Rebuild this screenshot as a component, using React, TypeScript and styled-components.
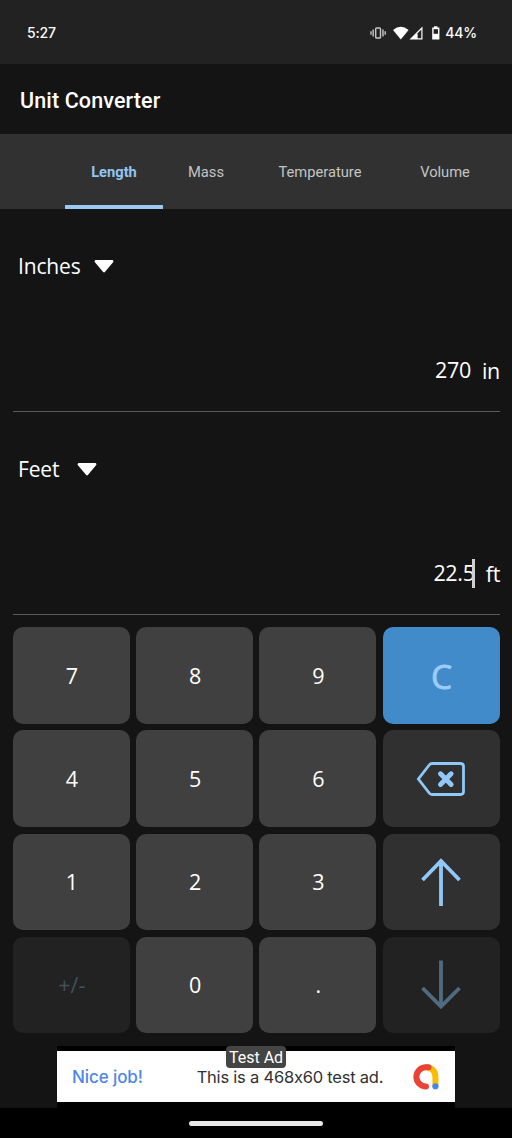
import React from 'react';
import styled, { createGlobalStyle } from 'styled-components';

const GlobalStyle = createGlobalStyle`
  * { box-sizing: border-box; }
  body { margin: 0; background: #141414; }
`;

const Screen = styled.div`
  display: flex;
  flex-direction: column;
  width: 512px;
  height: 1138px;
  overflow: hidden;
  background: #141414;
  color: #fff;
  font-family: 'Open Sans', 'Noto Sans', sans-serif;
`;

const StatusBar = styled.header`
  display: flex;
  align-items: center;
  justify-content: space-between;
  height: 64px;
  padding: 1px 35px 0 27px;
  background: #222;
  font: 500 14px/20px Inter, sans-serif;
  letter-spacing: -0.15px;
`;

const StatusIcons = styled.div`
  display: flex;
  align-items: center;
`;

const StatusSvg = styled.svg`
  display: block;
  margin-right: 4px;
`;

const AppBar = styled.div`
  display: flex;
  align-items: center;
  height: 70px;
  padding: 3px 20px 0;
  font: 500 21.5px/28px Roboto, sans-serif;
  letter-spacing: 0.13px;
`;

const Tabs = styled.nav`
  display: flex;
  height: 75px;
  padding-left: 65px;
  background: #313131;
`;

const Tab = styled.button<{ $width: number; $active?: boolean }>`
  flex: none;
  width: ${(p) => p.$width}px;
  padding: 5px 0 0;
  border: 0;
  border-bottom: 4px solid ${(p) => (p.$active ? '#9cc9f3' : 'transparent')};
  background: none;
  color: ${(p) => (p.$active ? '#90c5f5' : '#c4c4c4')};
  font: ${(p) => (p.$active ? 700 : 400)} 14.7px/20px Roboto, sans-serif;
  letter-spacing: 0;
  text-align: center;
`;

const UnitPanel = styled.section`
  display: flex;
  flex-direction: column;
  justify-content: space-between;
  height: 203px;
  margin: 0 12px 0 13px;
  padding: 42px 0 25px;
  border-bottom: 1px solid #5a5a5a;
`;

const UnitPicker = styled.button`
  display: flex;
  align-items: center;
  gap: 13px;
  padding: 0 0 0 5px;
  border: 0;
  background: none;
  color: #fff;
  font: 400 21px/30px 'Open Sans', 'Noto Sans', sans-serif;
  letter-spacing: -0.15px;
`;

const UnitName = styled.span<{ $width: number }>`
  width: ${(p) => p.$width}px;
  text-align: left;
`;

const Reading = styled.div`
  display: flex;
  justify-content: flex-end;
  align-items: center;
  gap: 11px;
  font-size: 21.5px;
  line-height: 30px;
`;

const Amount = styled.span`
  display: flex;
  align-items: center;
  letter-spacing: -0.3px;
`;

const Suffix = styled.span`
  padding-top: 2px;
  letter-spacing: -0.3px;
`;

const Caret = styled.i`
  width: 3px;
  height: 29px;
  margin-left: -3px;
  background: #d0d0d0;
`;

const Keypad = styled.main`
  display: grid;
  grid-template-columns: repeat(4, 117.2px);
  grid-auto-rows: 96.8px;
  gap: 6.3px 6.1px;
  height: 431px;
  padding: 12.4px 0 0 12.7px;
`;

type Tone = 'digit' | 'action' | 'clear' | 'disabled';

const toneBackground: Record<Tone, string> = {
  digit: '#404040',
  action: '#303030',
  clear: '#418bca',
  disabled: '#222222',
};

const toneColor: Record<Tone, string> = {
  digit: '#fff',
  action: '#90c8f8',
  clear: '#9dcbfa',
  disabled: '#41505d',
};

const Key = styled.button<{ $tone: Tone }>`
  display: flex;
  align-items: center;
  justify-content: center;
  padding: 0 0 0 1px;
  border: 0;
  border-radius: 10px;
  background: ${(p) => toneBackground[p.$tone]};
  color: ${(p) => toneColor[p.$tone]};
  font: 400 ${(p) => (p.$tone === 'clear' ? '33.5px' : '21.5px')}/30px 'Open Sans', 'Noto Sans', sans-serif;
  -webkit-text-stroke: ${(p) => (p.$tone === 'clear' ? '0.8px' : '0')};

  svg {
    margin-left: -1px;
  }
`;

const AdSlot = styled.aside`
  position: relative;
  flex: none;
  width: 398px;
  height: 62px;
  margin-left: 57px;
  padding: 5px 0 6px;
  background: #000;
`;

const Banner = styled.div`
  display: flex;
  align-items: center;
  height: 51px;
  padding: 0 15px;
  background: #fff;
  font-family: Inter, sans-serif;
  line-height: 24px;
`;

const AdHeadline = styled.strong`
  width: 125px;
  color: #4f86e8;
  font-size: 17px;
  font-weight: 500;
  letter-spacing: -0.1px;
`;

const AdText = styled.span`
  width: 216px;
  color: #303134;
  font-size: 16.5px;
  letter-spacing: -0.22px;
  white-space: nowrap;
`;

const AdTag = styled.span`
  position: absolute;
  top: 0;
  left: 169px;
  width: 60px;
  height: 22px;
  border-radius: 4px;
  background: #444;
  color: #fff;
  font: 400 16px/23px Roboto, sans-serif;
  text-align: center;
`;

const NavBar = styled.footer`
  display: flex;
  justify-content: center;
  flex: 1;
  padding-top: 13px;
  background: #000;
`;

const NavHandle = styled.div`
  width: 134px;
  height: 5px;
  border-radius: 3px;
  background: #e8e8e8;
`;

const Triangle = () => (
  <svg width="20" height="14" viewBox="0 0 20 14">
    <path d="M2 2.3H18L10 11.9Z" fill="#fff" stroke="#fff" strokeWidth="2.8" strokeLinejoin="round" />
  </svg>
);

const Backspace = () => (
  <svg width="50" height="36" viewBox="0 0 50 36" fill="none" stroke="currentColor">
    <path d="M16 2.5H44.5Q47.5 2.5 47.5 5.5V30.5Q47.5 33.5 44.5 33.5H16Q14.3 33.5 13.2 32L2.4 18L13.2 4Q14.3 2.5 16 2.5Z" strokeWidth="2.8" />
    <path d="M24.5 12.8L35.1 23.4M35.1 12.8L24.5 23.4" strokeWidth="5" strokeLinecap="round" />
  </svg>
);

const Arrow = ({ down = false }: { down?: boolean }) => (
  <svg width="40" height="50" viewBox="0 0 40 50" fill="none" stroke={down ? '#506b80' : 'currentColor'} strokeWidth="3.8">
    <path d={down ? 'M20 0.5V47M1.5 28L20 46.5L38.5 28' : 'M20 49V3M1.5 23L20 4L38.5 23'} />
  </svg>
);

const AdLogo = () => (
  <svg width="28" height="28" viewBox="0 0 28 28" fill="none" strokeWidth="6" strokeLinecap="round">
    <path d="M14.5 4.2Q23.5 5.3 23.5 14V23" stroke="#fbbc04" />
    <path d="M16.5 4.2H14A9.6 9.6 0 0 0 14 23.5" stroke="#ea4335" />
    <circle cx="23.5" cy="23.3" r="3.1" fill="#4285f4" />
  </svg>
);

const keys: { id: string; tone: Tone; face: React.ReactNode }[] = [
  { id: '7', tone: 'digit', face: '7' },
  { id: '8', tone: 'digit', face: '8' },
  { id: '9', tone: 'digit', face: '9' },
  { id: 'clear', tone: 'clear', face: 'C' },
  { id: '4', tone: 'digit', face: '4' },
  { id: '5', tone: 'digit', face: '5' },
  { id: '6', tone: 'digit', face: '6' },
  { id: 'back', tone: 'action', face: <Backspace /> },
  { id: '1', tone: 'digit', face: '1' },
  { id: '2', tone: 'digit', face: '2' },
  { id: '3', tone: 'digit', face: '3' },
  { id: 'up', tone: 'action', face: <Arrow /> },
  { id: 'sign', tone: 'disabled', face: '+/-' },
  { id: '0', tone: 'digit', face: '0' },
  { id: 'point', tone: 'digit', face: '.' },
  { id: 'down', tone: 'disabled', face: <Arrow down /> },
];

export default function App() {
  return (
    <Screen>
      <GlobalStyle />
      <StatusBar>
        <span>5:27</span>
        <StatusIcons>
          <StatusSvg width="71" height="16" viewBox="0 0 71 16">
            <g fill="none" stroke="#c8c8c8" strokeWidth="1.4">
              <rect x="5.7" y="3" width="4.8" height="10" rx="0.8" />
              <path d="M3.2 4.5V11.5M1 6.3V9.7M13 4.5V11.5M15.2 6.3V9.7" />
            </g>
            <path d="M23 5Q30.8 -1.4 38.6 5L30.8 14.6Z" fill="#fff" />
            <path d="M39.5 14.5L52.5 1.5V14.5Z" fill="#fff" />
            <path d="M47.6 8.2L51.3 4.5V13.2H47.6Z" fill="#222" />
            <path d="M62.2 2.6H64V1.2H67.4V2.6H69.4V14.6H62.2Z" fill="#fff" />
            <path d="M63.6 4.2H68V8.8H63.6Z" fill="#222" />
          </StatusSvg>
          <span>44%</span>
        </StatusIcons>
      </StatusBar>
      <AppBar>Unit Converter</AppBar>
      <Tabs>
        <Tab $width={98} $active>Length</Tab>
        <Tab $width={86}>Mass</Tab>
        <Tab $width={142}>Temperature</Tab>
        <Tab $width={108}>Volume</Tab>
      </Tabs>
      <UnitPanel>
        <UnitPicker><UnitName $width={63}>Inches</UnitName><Triangle /></UnitPicker>
        <Reading>
          <Amount>270</Amount>
          <Suffix>in</Suffix>
        </Reading>
      </UnitPanel>
      <UnitPanel>
        <UnitPicker><UnitName $width={45.5}>Feet</UnitName><Triangle /></UnitPicker>
        <Reading>
          <Amount>22.5<Caret /></Amount>
          <Suffix>ft</Suffix>
        </Reading>
      </UnitPanel>
      <Keypad>
        {keys.map((key) => (
          <Key key={key.id} $tone={key.tone}>{key.face}</Key>
        ))}
      </Keypad>
      <AdSlot>
        <Banner>
          <AdHeadline>Nice job!</AdHeadline>
          <AdText>This is a 468x60 test ad.</AdText>
          <AdLogo />
        </Banner>
        <AdTag>Test Ad</AdTag>
      </AdSlot>
      <NavBar>
        <NavHandle />
      </NavBar>
    </Screen>
  );
}
